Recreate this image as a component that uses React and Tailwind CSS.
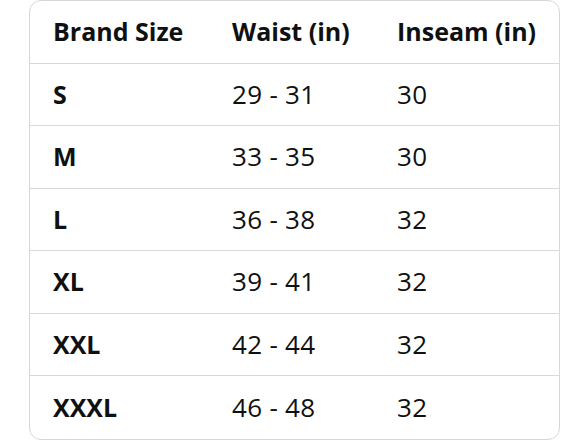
const rows = [
  { size: "S", waist: "29 - 31", inseam: "30" },
  { size: "M", waist: "33 - 35", inseam: "30" },
  { size: "L", waist: "36 - 38", inseam: "32" },
  { size: "XL", waist: "39 - 41", inseam: "32" },
  { size: "XXL", waist: "42 - 44", inseam: "32" },
  { size: "XXXL", waist: "46 - 48", inseam: "32" },
];

const App = () => {
  return (
    <div className="w-[588px] h-[441px] bg-white pl-[29px]" style={{ fontFamily: '"Open Sans", "Noto Sans", sans-serif' }}>
      <div className="w-[531px] border border-[#d5d9d9] rounded-[12px] text-[#0f1111] text-[26px]">
        {/* Header */}
        <div className="grid grid-cols-[178px_165px_1fr] h-[62.5px] items-center font-bold text-[25px] border-b border-[#d5d9d9]">
          <div className="pl-[23px]">Brand Size</div>
          <div className="pl-[24px]">Waist (in)</div>
          <div className="pl-[24px]">Inseam (in)</div>
        </div>
        {rows.map((row, i) => (
          <div
            key={row.size}
            className={
              "grid grid-cols-[178px_165px_1fr] h-[62.5px] items-center " +
              (i < rows.length - 1 ? "border-b border-[#d5d9d9]" : "")
            }
          >
            <div className="pl-[23px] font-bold text-[25px]">{row.size}</div>
            <div className="pl-[24px] tracking-[0.3px]">{row.waist}</div>
            <div className="pl-[24px] tracking-[0.3px]">{row.inseam}</div>
          </div>
        ))}
      </div>
    </div>
  );
};

export default App;
